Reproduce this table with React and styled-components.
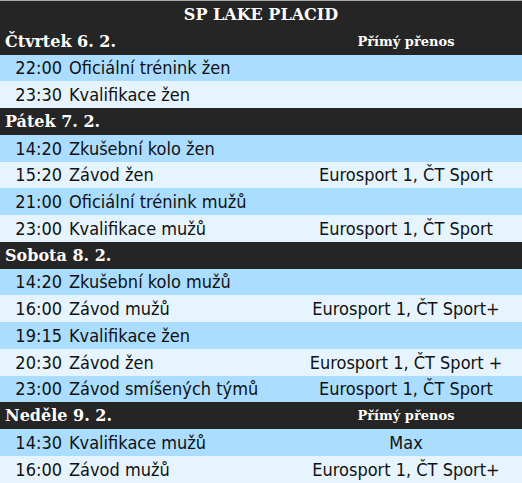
import React from 'react';
import styled, { createGlobalStyle } from 'styled-components';

const GlobalStyle = createGlobalStyle`
  html, body {
    margin: 0;
    padding: 0;
    background: #ffffff;
  }
`;

const Table = styled.div`
  width: 522px;
  border-top: 1px solid #a9a9a9;
  background: #252525;
  font-family: "DejaVu Sans Condensed", "Noto Sans", sans-serif;
`;

const Title = styled.div`
  height: 26.75px;
  display: flex;
  align-items: center;
  justify-content: center;
  color: #ffffff;
  font-family: "DejaVu Serif", serif;
  font-weight: bold;
  font-size: 16px;
`;

const DayRow = styled.div`
  height: 26.75px;
  display: grid;
  grid-template-columns: 290px 1fr;
  align-items: center;
  color: #ffffff;
  font-family: "DejaVu Serif", serif;
  font-weight: bold;
`;

const DayLabel = styled.div`
  padding-left: 5px;
  font-size: 16px;
`;

const LiveLabel = styled.div`
  text-align: center;
  font-size: 13px;
`;

const Row = styled.div`
  height: 26.75px;
  display: grid;
  grid-template-columns: 62px 228px 1fr;
  align-items: center;
  background: ${p => (p.$alt ? '#e6f4fe' : '#aaddff')};
  color: #111111;
  font-size: 18px;
`;

const Time = styled.div`
  text-align: right;
`;

const Event = styled.div`
  padding-left: 7px;
  white-space: nowrap;
`;

const Channel = styled.div`
  text-align: center;
  white-space: nowrap;
`;

const days = [
  {
    label: 'Čtvrtek 6. 2.',
    live: true,
    rows: [
      ['22:00', 'Oficiální trénink žen', ''],
      ['23:30', 'Kvalifikace žen', ''],
    ],
  },
  {
    label: 'Pátek 7. 2.',
    rows: [
      ['14:20', 'Zkušební kolo žen', ''],
      ['15:20', 'Závod žen', 'Eurosport 1, ČT Sport'],
      ['21:00', 'Oficiální trénink mužů', ''],
      ['23:00', 'Kvalifikace mužů', 'Eurosport 1, ČT Sport'],
    ],
  },
  {
    label: 'Sobota 8. 2.',
    rows: [
      ['14:20', 'Zkušební kolo mužů', ''],
      ['16:00', 'Závod mužů', 'Eurosport 1, ČT Sport+'],
      ['19:15', 'Kvalifikace žen', ''],
      ['20:30', 'Závod žen', 'Eurosport 1, ČT Sport +'],
      ['23:00', 'Závod smíšených týmů', 'Eurosport 1, ČT Sport'],
    ],
  },
  {
    label: 'Neděle 9. 2.',
    live: true,
    rows: [
      ['14:30', 'Kvalifikace mužů', 'Max'],
      ['16:00', 'Závod mužů', 'Eurosport 1, ČT Sport+'],
    ],
  },
];

export default function App() {
  return (
    <>
      <GlobalStyle />
      <Table>
        <Title>SP LAKE PLACID</Title>
        {days.map(day => (
          <React.Fragment key={day.label}>
            <DayRow>
              <DayLabel>{day.label}</DayLabel>
              <LiveLabel>{day.live ? 'Přímý přenos' : ''}</LiveLabel>
            </DayRow>
            {day.rows.map(([time, name, channel], i) => (
              <Row key={time + name} $alt={i % 2 === 1}>
                <Time>{time}</Time>
                <Event>{name}</Event>
                <Channel>{channel}</Channel>
              </Row>
            ))}
          </React.Fragment>
        ))}
      </Table>
    </>
  );
}
